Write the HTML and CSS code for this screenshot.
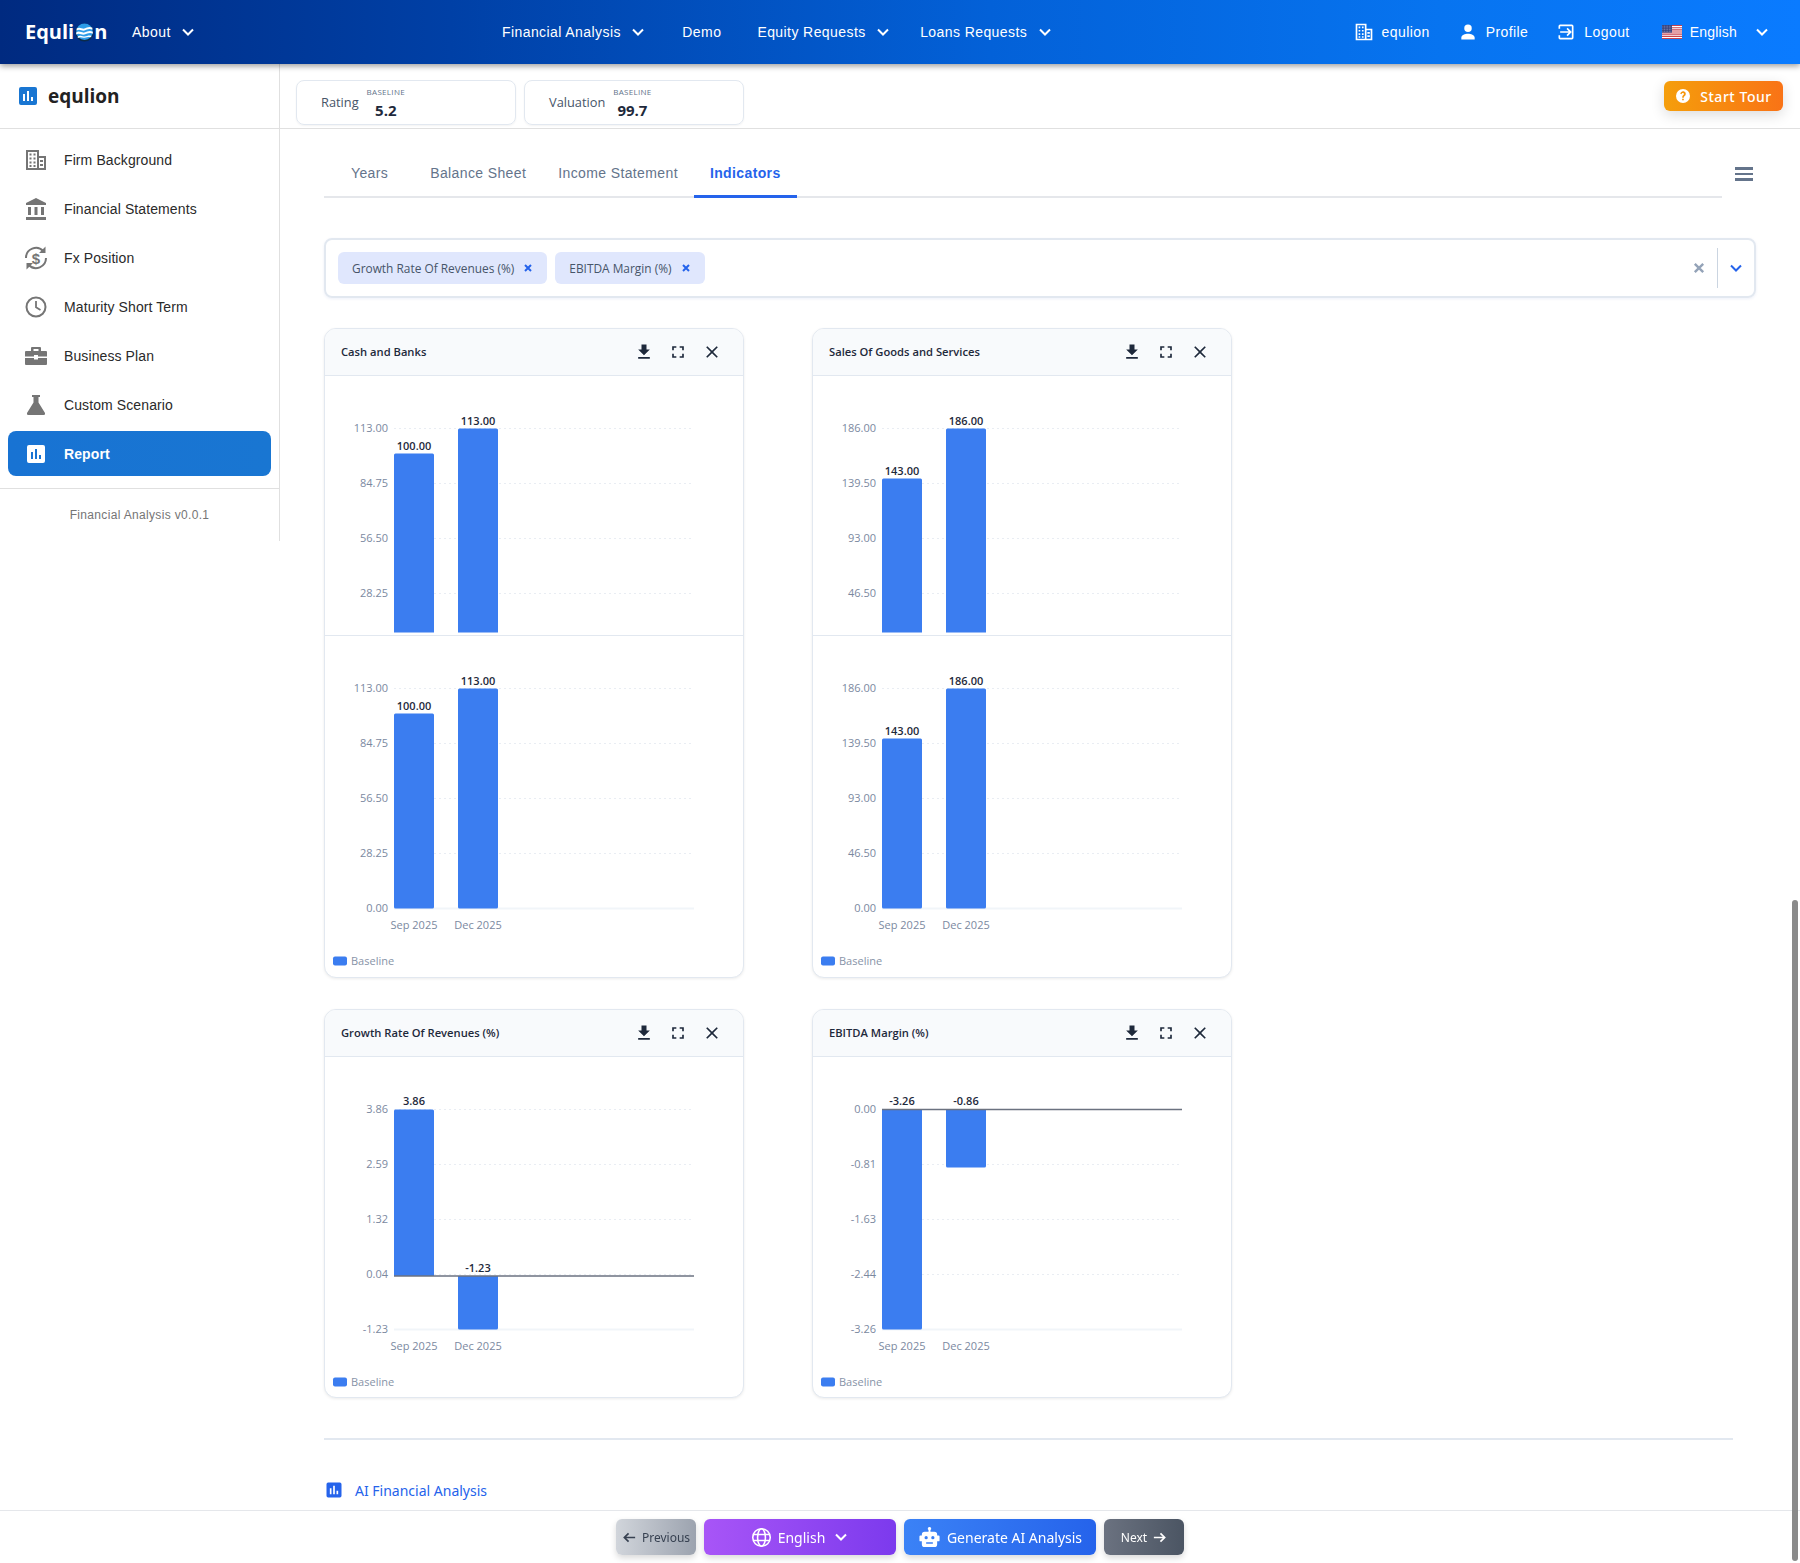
FILE: index.html
```html
<!DOCTYPE html>
<html lang="en">
<head>
<meta charset="utf-8">
<title>Equlion</title>
<link rel="stylesheet" href="styles.css">
</head>
<body>
<svg class="defs" width="0" height="0" aria-hidden="true">
  <symbol id="i-chev" viewBox="0 0 16 16"><path d="M3 5.500l5 5 5-5" fill="none" stroke="currentColor" stroke-width="2"/></symbol>
  <symbol id="i-build" viewBox="0 0 24 24"><path fill="currentColor" fill-rule="evenodd" d="M2 2h13v6h7v14H2zM4 4v16h9V4zM15 10v10h5V10zM5.500 5.500h2v2h-2zM9.500 5.500h2v2h-2zM5.500 9.500h2v2h-2zM9.500 9.500h2v2h-2zM5.500 13.500h2v2h-2zM9.500 13.500h2v2h-2zM5.500 17h2v2h-2zM9.500 17h2v2h-2zM16 12h3v2h-3zM16 16h3v2h-3z"/></symbol>
  <symbol id="i-bars" viewBox="0 0 24 24"><path fill="currentColor" fill-rule="evenodd" d="M5 3h14a2 2 0 0 1 2 2v14a2 2 0 0 1-2 2H5a2 2 0 0 1-2-2V5a2 2 0 0 1 2-2zM7 10v7h2v-7zM11 7v10h2V7zM15 13v4h2v-4z"/></symbol>
  <symbol id="i-dl" viewBox="0 0 24 24"><path fill="currentColor" d="M19 9h-4V3H9v6H5l7 7zM5 18v2h14v-2z"/></symbol>
  <symbol id="i-full" viewBox="0 0 24 24"><path fill="currentColor" d="M7 14H5v5h5v-2H7zM5 10h2V7h3V5H5zM17 17h-3v2h5v-5h-2zM14 5v2h3v3h2V5z"/></symbol>
  <symbol id="i-x" viewBox="0 0 24 24"><path fill="currentColor" d="M19 6.410 17.590 5 12 10.590 6.410 5 5 6.410 10.590 12 5 17.590 6.410 19 12 13.410 17.590 19 19 17.590 13.410 12z"/></symbol>
</svg>

<header class="topbar">
  <div class="top-left">
    <span class="brand">Equli<svg class="brand-o" viewBox="0 0 24 24" width="19" height="19"><circle cx="12" cy="12" r="11.500" fill="#0b2a4a"/><circle cx="12" cy="11" r="10.500" fill="#2c9be8"/><path d="M2 7c4-3 7 1 10 0s6-3 10-1v2.500c-4-2-7 0-10 1S6 7 2 9.500zM1.500 12c4-3 7 1 10.500 0s6-3 10.500-1v2.500c-4-2-7 0-10.500 1S5.500 12 1.500 14.500zM3.500 17c3-2 5 .5 8.500 0s5-2 8.500-1v2c-3-1-5 0-8.500.5s-5-1.500-8.500.5z" fill="#fff"/></svg>n</span>
    <a class="nav-item">About<svg class="chev"><use href="#i-chev"/></svg></a>
  </div>
  <nav class="top-mid">
    <a class="nav-item">Financial Analysis<svg class="chev"><use href="#i-chev"/></svg></a>
    <a class="nav-item">Demo</a>
    <a class="nav-item tight">Equity Requests<svg class="chev"><use href="#i-chev"/></svg></a>
    <a class="nav-item">Loans Requests<svg class="chev"><use href="#i-chev"/></svg></a>
  </nav>
  <div class="top-right">
    <a class="nav-item"><svg class="top-ic"><use href="#i-build"/></svg>equlion</a>
    <a class="nav-item"><svg class="top-ic" viewBox="0 0 24 24"><path fill="currentColor" d="M12 12a4.500 4.500 0 1 0 0-9 4.500 4.500 0 0 0 0 9zm0 2c-3.500 0-8 1.800-8 4.500V21h16v-2.500c0-2.700-4.500-4.500-8-4.500z"/></svg>Profile</a>
    <a class="nav-item"><svg class="top-ic" viewBox="0 0 24 24"><path fill="currentColor" d="M10 17l1.400-1.400L8.800 13H19v-2H8.800l2.600-2.600L10 7l-5 5z" transform="matrix(-1 0 0 1 24 0)"/><path fill="currentColor" d="M5 3h14a2 2 0 0 1 2 2v14a2 2 0 0 1-2 2H5a2 2 0 0 1-2-2v-3h2v3h14V5H5v3H3V5a2 2 0 0 1 2-2z"/></svg>Logout</a>
    <a class="nav-item lang"><svg class="flag" viewBox="0 0 20 14"><rect width="20" height="14" fill="#fff"/><path d="M0 0h20v1.100H0zM0 2.200h20v1.100H0zM0 4.300h20v1.100H0zM0 6.500h20v1.100H0zM0 8.600h20v1.100H0zM0 10.800h20v1.100H0zM0 12.900h20V14H0z" fill="#c8434f"/><rect width="10" height="7.600" fill="#35407a"/><path d="M.5 1.200h9M.5 2.900h9M.5 4.600h9M.5 6.300h9" stroke="#aab0d0" stroke-width=".7" stroke-dasharray=".8 .8"/></svg>English<svg class="chev"><use href="#i-chev"/></svg></a>
  </div>
</header>

<div class="app">
  <aside class="sidebar">
    <div class="side-head">
      <svg class="side-logo"><use href="#i-bars"/></svg>
      <span class="side-name">equlion</span>
    </div>
    <ul class="menu">
      <li class="menu-item"><svg class="menu-ic"><use href="#i-build"/></svg>Firm Background</li>
      <li class="menu-item"><svg class="menu-ic" viewBox="0 0 24 24"><path fill="currentColor" d="M12 1 2 6v2h20V6zM4 10h3v8H4zM10.500 10h3v8h-3zM17 10h3v8h-3zM2 20h20v3H2z"/></svg>Financial Statements</li>
      <li class="menu-item"><svg class="menu-ic" viewBox="0 0 24 24"><path fill="none" stroke="currentColor" stroke-width="2" d="M2 12a10 10 0 0 1 17.200-7M22 12a10 10 0 0 1-17.200 7"/><path fill="currentColor" d="M21.500.5v6.500h-6.500zM2.500 23.500V17h6.500z"/><text x="12" y="17.500" class="fx">$</text></svg>Fx Position</li>
      <li class="menu-item"><svg class="menu-ic" viewBox="0 0 24 24"><circle cx="12" cy="12" r="9.500" fill="none" stroke="currentColor" stroke-width="2"/><path d="M12 6v6.300l4.500 2.700" fill="none" stroke="currentColor" stroke-width="1.800"/></svg>Maturity Short Term</li>
      <li class="menu-item"><svg class="menu-ic" viewBox="0 0 24 24"><path fill="currentColor" fill-rule="evenodd" d="M8 3h8a1 1 0 0 1 1 1v3h5a1 1 0 0 1 1 1v4.500H14V11h-4v1.500H1V8a1 1 0 0 1 1-1h5V4a1 1 0 0 1 1-1zM9.500 5v2h5V5zM1 14h9v1.500h4V14h9v6a1 1 0 0 1-1 1H2a1 1 0 0 1-1-1z"/></svg>Business Plan</li>
      <li class="menu-item"><svg class="menu-ic" viewBox="0 0 24 24"><path fill="currentColor" d="M8 2h8v2h-1.500v5.500L21 20a1.500 1.500 0 0 1-1.300 2H4.300A1.500 1.500 0 0 1 3 20L9.500 9.500V4H8z"/></svg>Custom Scenario</li>
      <li class="menu-item active"><svg class="menu-ic"><use href="#i-bars"/></svg>Report</li>
    </ul>
    <div class="version">Financial Analysis v0.0.1</div>
  </aside>

  <main class="main">
    <div class="summary">
      <div class="kpis">
        <div class="kpi"><span class="kpi-label">Rating</span><div class="kpi-val"><small>BASELINE</small><b>5.2</b></div></div>
        <div class="kpi"><span class="kpi-label">Valuation</span><div class="kpi-val"><small>BASELINE</small><b>99.7</b></div></div>
      </div>
      <button class="tour"><svg viewBox="0 0 24 24" width="16" height="16"><path fill="#fff" d="M12 1.500a10.500 10.500 0 1 0 0 21 10.500 10.500 0 0 0 0-21zM13.200 18.500h-2.500V16h2.500zm2.500-7.700c-.8 1.100-2.400 1.500-2.500 3.700h-2.500c0-3 1.800-3.700 2.500-4.700.6-.9.200-2.300-1.300-2.300-1.300 0-1.800 1-2 1.900l-2.300-1C8.700 6.500 10 5 12 5c3.600 0 5 3.500 3.700 5.800z"/></svg>Start Tour</button>
    </div>

    <div class="content">
      <div class="tabs-row">
        <div class="tabs">
          <span class="tab">Years</span>
          <span class="tab">Balance Sheet</span>
          <span class="tab">Income Statement</span>
          <span class="tab on">Indicators</span>
        </div>
        <div class="burger"><i></i><i></i><i></i></div>
      </div>

      <div class="select">
        <div class="chips">
          <span class="chip">Growth Rate Of Revenues (%)<svg class="chip-x" viewBox="0 0 10 10"><path d="M2 2l6 6M8 2l-6 6" stroke="currentColor" stroke-width="2"/></svg></span>
          <span class="chip">EBITDA Margin (%)<svg class="chip-x" viewBox="0 0 10 10"><path d="M2 2l6 6M8 2l-6 6" stroke="currentColor" stroke-width="2"/></svg></span>
        </div>
        <svg class="clear" viewBox="0 0 10 10"><path d="M1.500 1.500l7 7M8.500 1.500l-7 7" stroke="currentColor" stroke-width="2"/></svg>
        <span class="sep"></span>
        <svg class="caret"><use href="#i-chev"/></svg>
      </div>

      <div class="cards">
        <section class="card tall">
          <div class="card-head"><h3>Cash and Banks</h3><div class="tools"><svg><use href="#i-dl"/></svg><svg><use href="#i-full"/></svg><svg><use href="#i-x"/></svg></div></div>
          <svg class="plot clip" viewBox="0 0 420 257" width="420" height="257">
            <g class="grid"><path d="M70 52.500H368M70 107.500H368M70 162.500H368M70 217.500H368"/></g>
            <g class="yl"><text x="64" y="56">113.00</text><text x="64" y="111">84.75</text><text x="64" y="166">56.50</text><text x="64" y="221">28.25</text></g>
            <path class="bar" d="M70 256.500V79a1.500 1.500 0 0 1 1.500-1.500h37a1.500 1.500 0 0 1 1.500 1.500V256.500zM134 256.500V54a1.500 1.500 0 0 1 1.500-1.500h37a1.500 1.500 0 0 1 1.500 1.500V256.500z"/>
            <g class="vl"><text x="90" y="73.500">100.00</text><text x="154" y="48.500">113.00</text></g>
          </svg>
          <svg class="plot second" viewBox="0 0 420 341" width="420" height="341">
            <g class="grid"><path d="M70 52.500H368M70 107.500H368M70 162.500H368M70 217.500H368"/></g>
            <path class="axis" d="M70 272.500H370"/>
            <g class="yl"><text x="64" y="56">113.00</text><text x="64" y="111">84.75</text><text x="64" y="166">56.50</text><text x="64" y="221">28.25</text><text x="64" y="276">0.00</text></g>
            <path class="bar" d="M70 271.500V79a1.500 1.500 0 0 1 1.500-1.500h37a1.500 1.500 0 0 1 1.500 1.500V271a1.500 1.500 0 0 1-1.500 1.500h-37a1.500 1.500 0 0 1-1.500-1.500zM134 271.500V54a1.500 1.500 0 0 1 1.500-1.500h37a1.500 1.500 0 0 1 1.500 1.500V271a1.500 1.500 0 0 1-1.500 1.500h-37a1.500 1.500 0 0 1-1.500-1.500z"/>
            <g class="vl"><text x="90" y="73.500">100.00</text><text x="154" y="48.500">113.00</text></g>
            <g class="xl"><text x="90" y="292.500">Sep 2025</text><text x="154" y="292.500">Dec 2025</text></g>
            <rect class="lg" x="9" y="320.500" width="14" height="9" rx="2"/><text class="lgt" x="27" y="329">Baseline</text>
          </svg>
        </section>

        <section class="card tall">
          <div class="card-head"><h3>Sales Of Goods and Services</h3><div class="tools"><svg><use href="#i-dl"/></svg><svg><use href="#i-full"/></svg><svg><use href="#i-x"/></svg></div></div>
          <svg class="plot clip" viewBox="0 0 420 257" width="420" height="257">
            <g class="grid"><path d="M70 52.500H368M70 107.500H368M70 162.500H368M70 217.500H368"/></g>
            <g class="yl"><text x="64" y="56">186.00</text><text x="64" y="111">139.50</text><text x="64" y="166">93.00</text><text x="64" y="221">46.50</text></g>
            <path class="bar" d="M70 256.500V104a1.500 1.500 0 0 1 1.500-1.500h37a1.500 1.500 0 0 1 1.500 1.500V256.500zM134 256.500V54a1.500 1.500 0 0 1 1.500-1.500h37a1.500 1.500 0 0 1 1.500 1.500V256.500z"/>
            <g class="vl"><text x="90" y="98.500">143.00</text><text x="154" y="48.500">186.00</text></g>
          </svg>
          <svg class="plot second" viewBox="0 0 420 341" width="420" height="341">
            <g class="grid"><path d="M70 52.500H368M70 107.500H368M70 162.500H368M70 217.500H368"/></g>
            <path class="axis" d="M70 272.500H370"/>
            <g class="yl"><text x="64" y="56">186.00</text><text x="64" y="111">139.50</text><text x="64" y="166">93.00</text><text x="64" y="221">46.50</text><text x="64" y="276">0.00</text></g>
            <path class="bar" d="M70 271.500V104a1.500 1.500 0 0 1 1.500-1.500h37a1.500 1.500 0 0 1 1.500 1.500V271a1.500 1.500 0 0 1-1.500 1.500h-37a1.500 1.500 0 0 1-1.500-1.500zM134 271.500V54a1.500 1.500 0 0 1 1.500-1.500h37a1.500 1.500 0 0 1 1.500 1.500V271a1.500 1.500 0 0 1-1.500 1.500h-37a1.500 1.500 0 0 1-1.500-1.500z"/>
            <g class="vl"><text x="90" y="98.500">143.00</text><text x="154" y="48.500">186.00</text></g>
            <g class="xl"><text x="90" y="292.500">Sep 2025</text><text x="154" y="292.500">Dec 2025</text></g>
            <rect class="lg" x="9" y="320.500" width="14" height="9" rx="2"/><text class="lgt" x="27" y="329">Baseline</text>
          </svg>
        </section>

        <section class="card">
          <div class="card-head"><h3>Growth Rate Of Revenues (%)</h3><div class="tools"><svg><use href="#i-dl"/></svg><svg><use href="#i-full"/></svg><svg><use href="#i-x"/></svg></div></div>
          <svg class="plot" viewBox="0 0 420 341" width="420" height="341">
            <g class="grid"><path d="M70 52.500H368M70 107.500H368M70 162.500H368M70 217.500H368"/></g>
            <path class="axis" d="M70 272.500H370"/>
            <g class="yl"><text x="64" y="56">3.86</text><text x="64" y="111">2.59</text><text x="64" y="166">1.32</text><text x="64" y="221">0.04</text><text x="64" y="276">-1.23</text></g>
            <path class="bar" d="M70 219V54a1.500 1.500 0 0 1 1.500-1.500h37a1.500 1.500 0 0 1 1.500 1.500V219zM134 219h40V271a1.500 1.500 0 0 1-1.500 1.500h-37a1.500 1.500 0 0 1-1.500-1.500z"/>
            <path class="zero" d="M70 219H370"/>
            <g class="vl"><text x="90" y="48">3.86</text><text x="154" y="214.500">-1.23</text></g>
            <g class="xl"><text x="90" y="292.500">Sep 2025</text><text x="154" y="292.500">Dec 2025</text></g>
            <rect class="lg" x="9" y="320.500" width="14" height="9" rx="2"/><text class="lgt" x="27" y="329">Baseline</text>
          </svg>
        </section>

        <section class="card">
          <div class="card-head"><h3>EBITDA Margin (%)</h3><div class="tools"><svg><use href="#i-dl"/></svg><svg><use href="#i-full"/></svg><svg><use href="#i-x"/></svg></div></div>
          <svg class="plot" viewBox="0 0 420 341" width="420" height="341">
            <g class="grid"><path d="M70 107.500H368M70 162.500H368M70 217.500H368"/></g>
            <path class="axis" d="M70 272.500H370"/>
            <g class="yl"><text x="64" y="56">0.00</text><text x="64" y="111">-0.81</text><text x="64" y="166">-1.63</text><text x="64" y="221">-2.44</text><text x="64" y="276">-3.26</text></g>
            <path class="bar" d="M70 53h40V271a1.500 1.500 0 0 1-1.500 1.500h-37a1.500 1.500 0 0 1-1.500-1.500zM134 53h40V109a1.500 1.500 0 0 1-1.500 1.500h-37a1.500 1.500 0 0 1-1.500-1.500z"/>
            <path class="zero" d="M70 52.500H370"/>
            <g class="vl"><text x="90" y="48">-3.26</text><text x="154" y="48">-0.86</text></g>
            <g class="xl"><text x="90" y="292.500">Sep 2025</text><text x="154" y="292.500">Dec 2025</text></g>
            <rect class="lg" x="9" y="320.500" width="14" height="9" rx="2"/><text class="lgt" x="27" y="329">Baseline</text>
          </svg>
        </section>
      </div>

      <hr class="rule">
      <div class="ai-title"><svg class="ai-ic"><use href="#i-bars"/></svg>AI Financial Analysis</div>
    </div>
  </main>
</div>

<footer class="footer">
  <button class="btn prev"><svg class="arrow" viewBox="0 0 16 16"><path d="M14 8H3M7 3.500 2.500 8 7 12.500" fill="none" stroke="currentColor" stroke-width="1.800"/></svg>Previous</button>
  <button class="btn lang-btn"><svg viewBox="0 0 24 24" width="21" height="21"><g fill="none" stroke="#fff" stroke-width="1.800"><circle cx="12" cy="12" r="10"/><ellipse cx="12" cy="12" rx="4.500" ry="10"/><path d="M2.500 8.500h19M2.500 15.500h19"/></g></svg>English<svg class="chev"><use href="#i-chev"/></svg></button>
  <button class="btn gen"><svg viewBox="0 0 24 24" width="23" height="23"><path fill="#fff" fill-rule="evenodd" d="M12 1a1.800 1.800 0 0 1 1 3.300V6h4a3 3 0 0 1 3 3v1h1.500a1 1 0 0 1 1 1v4a1 1 0 0 1-1 1H20v3a3 3 0 0 1-3 3H7a3 3 0 0 1-3-3v-3H2.500a1 1 0 0 1-1-1v-4a1 1 0 0 1 1-1H4V9a3 3 0 0 1 3-3h4V4.300A1.800 1.800 0 0 1 12 1zM8.500 10.500a1.700 1.700 0 1 0 0 3.400 1.700 1.700 0 0 0 0-3.400zm7 0a1.700 1.700 0 1 0 0 3.400 1.700 1.700 0 0 0 0-3.400zM8.500 17v1.500h7V17z"/></svg>Generate AI Analysis</button>
  <button class="btn next">Next<svg class="arrow" viewBox="0 0 16 16"><path d="M2 8h11M9 3.500 13.500 8 9 12.500" fill="none" stroke="currentColor" stroke-width="1.800"/></svg></button>
</footer>
<div class="scroll-thumb"></div>
</body>
</html>
```

FILE: styles.css
```css
* { box-sizing: border-box; }
html, body { margin: 0; height: 100%; overflow: hidden; background: #fff; }
body { font-family: "Noto Sans", "Open Sans", sans-serif; color: #1e293b; }
.defs { position: absolute; }

/* top bar */
.topbar {
  height: 64px; display: flex; align-items: center; position: relative; z-index: 3;
  padding: 0 30px 0 25px;
  color: #fff;
  background: linear-gradient(90deg, #002a80 0%, #0040a6 25%, #0361d8 55%, #0774f0 80%, #0a7bff 100%);
  box-shadow: 0 2px 6px rgba(0, 0, 0, .4);
  font-family: "Liberation Sans", Arial, sans-serif;
}
.top-left { display: flex; align-items: center; width: 477px; }
.brand { font: 700 20px/1 "Open Sans", sans-serif; display: inline-flex; align-items: center; width: 107px; }
.brand-o { margin: 0 .5px; }
.nav-item { display: inline-flex; align-items: center; font-size: 14px; letter-spacing: .42px; white-space: nowrap; }
.chev { width: 16px; height: 16px; flex: none; margin-left: 9.500px; }
.tight { margin-right: -7px; }
.top-mid { display: flex; gap: 36px; }
.top-right { display: flex; gap: 28px; margin-left: auto; }
.top-ic { width: 20px; height: 20px; margin-right: 8px; flex: none; }
.flag { width: 20px; height: 14px; margin-right: 8px; }
.lang { margin-left: 4px; letter-spacing: .2px; }
.lang .chev { margin-left: 17px; }

/* layout */
.app { display: flex; align-items: flex-start; height: calc(100vh - 64px); }
.sidebar { width: 280px; height: 477px; flex: none; border-right: 1px solid #e0e0e0; font-family: "Liberation Sans", Arial, sans-serif; }
.side-head { height: 65px; display: flex; align-items: center; padding-left: 16px; border-bottom: 1px solid #e0e0e0; }
.side-logo { width: 24px; height: 24px; color: #1976d2; margin-right: 8px; }
.side-name { font: 700 19px/1 "Open Sans", sans-serif; color: #222; }
.menu { list-style: none; margin: 8px 0 0; padding: 0 8px; }
.menu-item { height: 45px; margin-bottom: 4px; display: flex; align-items: center; padding-left: 16px; font-size: 14px; color: #2a2a2a; border-radius: 8px; letter-spacing: .1px; }
.menu-ic { width: 24px; height: 24px; color: #757575; margin-right: 16px; flex: none; }
.menu-item.active { background: linear-gradient(90deg, #1873d3, #1976d2); color: #fff; font-weight: 700; }
.menu-item.active .menu-ic { color: #fff; }
.fx { font: 700 15px "Liberation Sans", sans-serif; text-anchor: middle; fill: currentColor; }
.version { margin-top: 12px; border-top: 1px solid #e0e0e0; padding-top: 19px; text-align: center; font-size: 12px; color: #757575; letter-spacing: .33px; }

.main { flex: 1; min-width: 0; }
.summary { height: 65px; display: flex; justify-content: space-between; align-items: flex-start; padding: 16px 17px 0 16px; border-bottom: 1px solid #e0e0e0; }
.kpis { display: flex; gap: 8px; }
.kpi { width: 220px; height: 45px; border: 1px solid #e2e8f0; border-radius: 8px; display: flex; align-items: center; padding-left: 24px; box-shadow: 0 1px 2px rgba(0, 0, 0, .05); font-family: "Open Sans", sans-serif; }
.kpi-label { font-size: 12.800px; color: #475569; margin: 0 8px 2px 0; }
.kpi-val { display: flex; flex-direction: column; align-items: center; }
.kpi-val small { font-size: 8px; line-height: 11px; color: #64748b; letter-spacing: .3px; }
.kpi-val b { font-size: 15px; line-height: 19px; color: #1e293b; margin-top: 4px; }
.tour { width: 119px; height: 30px; margin-top: 1px; border: 0; border-radius: 6px; color: #fff; font: 500 14px "Noto Sans", sans-serif; letter-spacing: .55px; display: flex; align-items: center; justify-content: center; gap: 9px; background: linear-gradient(90deg, #f59e0b, #f97316); box-shadow: 0 4px 14px rgba(0, 0, 0, .14); }

.content { padding: 0 44px 0 44px; }
.tabs-row { display: flex; align-items: flex-start; height: 69px; }
.tabs { width: 1398px; height: 69px; display: flex; padding-top: 19px; border-bottom: 2px solid #e5e7eb; padding-left: 10px; }
.tab { font: 14px "Liberation Sans", sans-serif; letter-spacing: .38px; color: #64748b; padding: 17px 16px 0; height: 50px; text-align: center; }
.tab:first-child { padding-left: 17px; padding-right: 26px; }
.tab.on { color: #2563eb; font-weight: 700; border-bottom: 3px solid #2563eb; }
.burger { margin: 38px 0 0 13px; width: 18px; display: flex; flex-direction: column; gap: 3px; }
.burger i { height: 2.500px; background: #64748b; display: block; }

.select { height: 60px; margin-top: 40px; border: 2px solid #e2e8f0; border-radius: 8px; display: flex; align-items: center; padding: 0 0 0 12px; box-shadow: 0 1px 3px rgba(30, 64, 175, .08); }
.chips { display: flex; gap: 8px; flex: 1; }
.chip { height: 32px; display: inline-flex; align-items: center; gap: 9px; padding: 0 14px 0 14px; background: #e0e7fd; border-radius: 6px; font: 11.900px "Open Sans", sans-serif; color: #475569; }
.chip-x { width: 10px; height: 10px; color: #2563eb; }
.clear { width: 12px; height: 12px; color: #94a3b8; margin-right: 12px; }
.sep { width: 1px; height: 40px; background: #cbd5e1; }
.caret { width: 16px; height: 16px; color: #2563eb; margin: 0 10px 0 10px; }

.cards { display: grid; grid-template-columns: 419.500px 419.500px; column-gap: 68.500px; row-gap: 31px; margin-top: 30px; align-items: start; font-family: "Open Sans", sans-serif; }
.card { border: 1px solid #e2e8f0; border-radius: 12px; overflow: hidden; background: #fff; box-shadow: 0 1px 3px rgba(0, 0, 0, .08); height: 389px; }
.card.tall { height: 650px; }
.card-head { height: 47px; padding: 0 16px 1px; background: #f8fafc; border-bottom: 1px solid #e2e8f0; display: flex; align-items: center; justify-content: space-between; }
.card-head h3 { margin: 0; font-size: 11.200px; font-weight: 600; color: #1e293b; }
.tools { display: flex; gap: 14px; margin-right: 5px; color: #1e293b; }
.tools svg { width: 20px; height: 20px; display: block; }
.plot { display: block; margin-left: -1px; }
.plot.second { border-top: 1px solid #e2e8f0; box-sizing: content-box; margin-top: 2px; }
.clip { overflow: hidden; }
.grid path { stroke: #e9edf3; stroke-dasharray: 2 3; fill: none; stroke-width: 1; }
.axis { stroke: #f1f5f9; stroke-width: 2; fill: none; }
.zero { stroke: #6b7280; stroke-width: 1.500; fill: none; }
.bar { fill: #3b7df0; }
.yl text { font-size: 11px; fill: #7b899f; text-anchor: end; }
.vl text { font-size: 11px; font-weight: 600; fill: #1e293b; text-anchor: middle; }
.xl text { font-size: 11px; fill: #7b899f; text-anchor: middle; }
.lg { fill: #3b7df0; }
.lgt { font-size: 11px; fill: #8793a7; }

.rule { border: 0; height: 2px; background: #e2e8f0; margin: 40px 23px 0 0; }
.ai-title { display: flex; align-items: center; margin-top: 40px; font-size: 14px; color: #2563eb; gap: 11px; }
.ai-ic { width: 20px; height: 20px; color: #2563eb; }

/* footer */
.footer { position: fixed; left: 0; right: 0; bottom: 0; height: 53px; background: #fff; border-top: 1px solid #e5e7eb; display: flex; justify-content: center; gap: 8px; padding-top: 8px; z-index: 2; }
.btn { height: 36px; border: 0; border-radius: 6px; display: flex; align-items: center; justify-content: center; color: #fff; font-family: "Noto Sans", sans-serif; font-size: 14px; box-shadow: 0 3px 6px rgba(0, 0, 0, .15); padding: 0; }
.prev { width: 80px; gap: 5px; font-size: 12px; color: #374151; background: linear-gradient(90deg, #d1d5db, #9ca3af); }
.lang-btn { width: 192px; gap: 6px; background: linear-gradient(90deg, #a855f7, #7c3aed); }
.lang-btn .chev { margin-left: 2px; }
.gen { width: 192px; gap: 6px; background: linear-gradient(90deg, #3b82f6, #2563eb); }
.next { width: 80px; gap: 5px; font-size: 12px; background: linear-gradient(90deg, #6b7280, #4b5563); }
.arrow { width: 15px; height: 15px; }
.scroll-thumb { position: fixed; right: 2px; top: 900px; width: 6px; height: 661px; background: #8a8a8a; border-radius: 3px; z-index: 4; }
```
